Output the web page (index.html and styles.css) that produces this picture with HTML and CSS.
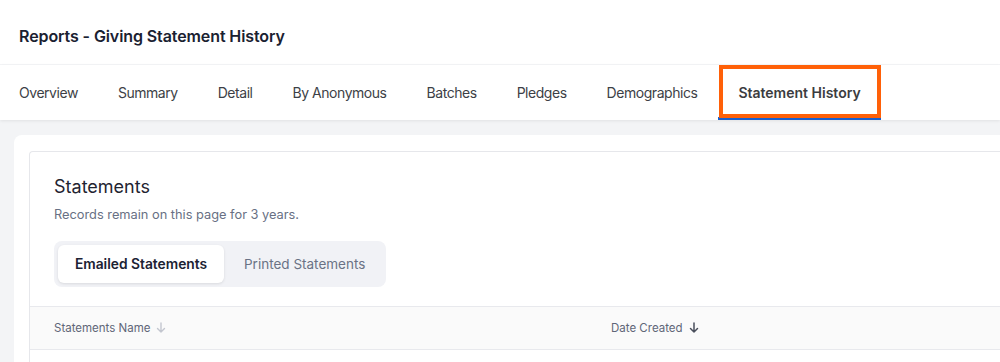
FILE: index.html
```html
<!DOCTYPE html>
<html>
<head>
<meta charset="utf-8">
<link rel="stylesheet" href="styles.css">
</head>
<body>
<header class="page-header">
  <h1 class="page-title">Reports - Giving Statement History</h1>
</header>
<nav class="tabs">
  <a class="tab">Overview</a>
  <a class="tab">Summary</a>
  <a class="tab">Detail</a>
  <a class="tab">By Anonymous</a>
  <a class="tab">Batches</a>
  <a class="tab">Pledges</a>
  <a class="tab">Demographics</a>
  <a class="tab tab-active">Statement History</a>
</nav>
<main class="content">
  <section class="card">
    <div class="panel">
      <div class="panel-head">
        <h2 class="panel-title">Statements</h2>
        <p class="panel-sub">Records remain on this page for 3 years.</p>
        <div class="segmented">
          <button class="seg seg-active">Emailed Statements</button>
          <button class="seg">Printed Statements</button>
        </div>
      </div>
      <div class="table-head">
        <div class="th th-name">Statements Name
          <svg class="sort-icon light" width="10" height="12" viewBox="0 0 10 12"><path d="M5 1v9M1.5 6.5L5 10l3.5-3.5" fill="none" stroke="currentColor" stroke-width="1.4" stroke-linecap="round" stroke-linejoin="round"/></svg>
        </div>
        <div class="th th-date">Date Created
          <svg class="sort-icon dark" width="10" height="12" viewBox="0 0 10 12"><path d="M5 1v9M1.5 6.5L5 10l3.5-3.5" fill="none" stroke="currentColor" stroke-width="1.5" stroke-linecap="round" stroke-linejoin="round"/></svg>
        </div>
      </div>
    </div>
  </section>
</main>
</body>
</html>
```

FILE: styles.css
```css
* { box-sizing: border-box; }
html, body { margin: 0; padding: 0; }
body {
  width: 1000px;
  height: 362px;
  overflow: hidden;
  background: #f3f4f6;
  font-family: Inter, "Noto Sans", sans-serif;
  color: #1c2233;
}
.page-header {
  background: #fff;
  height: 65px;
  padding: 0 19px;
  display: flex;
  align-items: center;
  border-bottom: 1px solid #f4f5f7;
}
.page-title {
  margin: 0;
  font-size: 16px;
  font-weight: 600;
  letter-spacing: -0.1px;
  color: #1a2131;
  position: relative;
  top: 4px;
}
.tabs {
  background: #fff;
  height: 55px;
  display: flex;
  box-shadow: 0 1px 3px rgba(0,0,0,0.08);
  position: relative;
}
.tab {
  display: flex;
  align-items: center;
  padding: 0 20px 0 19px;
  margin-right: 1px;
  font-size: 14px;
  letter-spacing: -0.46px;
  color: #3d3f46;
  height: 100%;
  position: relative;
}
.tab-active {
  padding: 3px 20px 0 20px;
  font-weight: 600;
  letter-spacing: 0;
  color: #3b3c40;
  border-bottom: 3px solid #1a5fcc;
}
.tab-active::after {
  content: "";
  position: absolute;
  left: 1px;
  right: 0;
  top: 0;
  height: 45px;
  border: 4px solid #ff6008;
}
.content {
  padding: 15px 0 0 14px;
}
.card {
  background: #fff;
  border-radius: 8px 0 0 0;
  padding: 16px 0 0 15px;
  height: 227px;
  overflow: hidden;
}
.panel {
  border: 1px solid #e6e7eb;
  border-right: none;
  border-bottom: none;
  border-radius: 4px 0 0 0;
  height: 100%;
}
.panel-head {
  padding: 24px 24px 19px 24px;
}
.panel-title {
  margin: 0;
  font-size: 18px;
  font-weight: 400;
  color: #1f2431;
  line-height: 22px;
}
.panel-sub {
  margin: 9px 0 0;
  font-size: 12.8px;
  color: #687084;
  line-height: 16px;
}
.segmented {
  margin-top: 18px;
  display: flex;
  width: 332px;
  background: #f1f2f6;
  border-radius: 8px;
  padding: 4px;
  gap: 4px;
  height: 46px;
}
.seg {
  border: none;
  background: transparent;
  font-family: inherit;
  font-size: 13.5px;
  color: #6a7285;
  padding: 0 16px;
  border-radius: 6px;
}
.seg-active {
  width: 166px;
  background: #fff;
  color: #1c2233;
  font-size: 13.8px;
  font-weight: 600;
  box-shadow: 0 1px 3px rgba(0,0,0,0.1);
}
.table-head {
  height: 44px;
  background: #fafafa;
  border-top: 1px solid #e8e9ed;
  border-bottom: 1px solid #e8e9ed;
  display: flex;
  align-items: center;
  padding-left: 24px;
}
.th {
  font-size: 11.5px;
  color: #5f6678;
  display: flex;
  align-items: center;
  gap: 6px;
}
.th-name { width: 557px; }
.sort-icon.light { color: #c3c6cf; }
.sort-icon.dark { color: #4a4f5c; }
```
